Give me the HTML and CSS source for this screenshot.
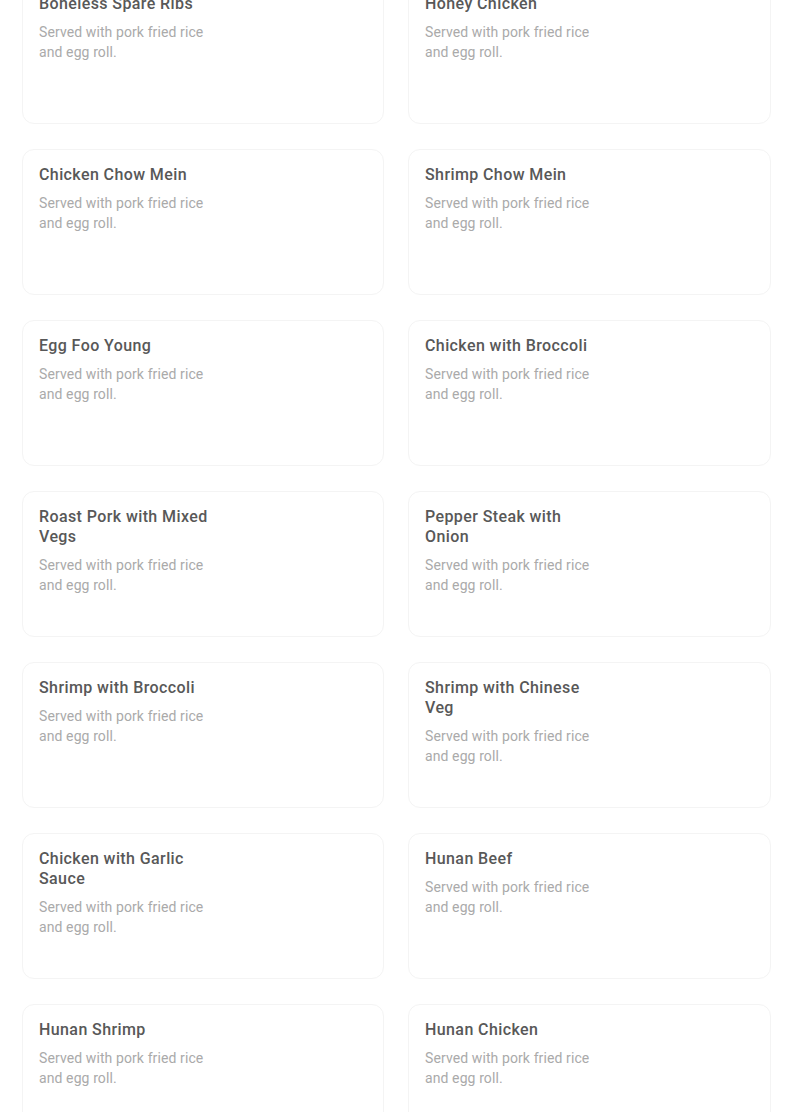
FILE: index.html
```html
<!DOCTYPE html>
<html lang="en">
<head>
<meta charset="utf-8">
<title>Menu</title>
<link rel="stylesheet" href="styles.css">
</head>
<body>
<main class="menu">
  <div class="card"><div class="info"><h3 class="name">Boneless Spare Ribs</h3><p class="desc">Served with pork fried rice and egg roll.</p></div></div>
  <div class="card"><div class="info"><h3 class="name">Honey Chicken</h3><p class="desc">Served with pork fried rice and egg roll.</p></div></div>
  <div class="card"><div class="info"><h3 class="name">Chicken Chow Mein</h3><p class="desc">Served with pork fried rice and egg roll.</p></div></div>
  <div class="card"><div class="info"><h3 class="name">Shrimp Chow Mein</h3><p class="desc">Served with pork fried rice and egg roll.</p></div></div>
  <div class="card"><div class="info"><h3 class="name">Egg Foo Young</h3><p class="desc">Served with pork fried rice and egg roll.</p></div></div>
  <div class="card"><div class="info"><h3 class="name">Chicken with Broccoli</h3><p class="desc">Served with pork fried rice and egg roll.</p></div></div>
  <div class="card"><div class="info"><h3 class="name">Roast Pork with Mixed Vegs</h3><p class="desc">Served with pork fried rice and egg roll.</p></div></div>
  <div class="card"><div class="info"><h3 class="name">Pepper Steak with Onion</h3><p class="desc">Served with pork fried rice and egg roll.</p></div></div>
  <div class="card"><div class="info"><h3 class="name">Shrimp with Broccoli</h3><p class="desc">Served with pork fried rice and egg roll.</p></div></div>
  <div class="card"><div class="info"><h3 class="name">Shrimp with Chinese Veg</h3><p class="desc">Served with pork fried rice and egg roll.</p></div></div>
  <div class="card"><div class="info"><h3 class="name">Chicken with Garlic Sauce</h3><p class="desc">Served with pork fried rice and egg roll.</p></div></div>
  <div class="card"><div class="info"><h3 class="name">Hunan Beef</h3><p class="desc">Served with pork fried rice and egg roll.</p></div></div>
  <div class="card"><div class="info"><h3 class="name">Hunan Shrimp</h3><p class="desc">Served with pork fried rice and egg roll.</p></div></div>
  <div class="card"><div class="info"><h3 class="name">Hunan Chicken</h3><p class="desc">Served with pork fried rice and egg roll.</p></div></div>
</main>
</body>
</html>
```
FILE: styles.css
```css
html, body {
  margin: 0;
  padding: 0;
  background: #ffffff;
  overflow: hidden;
}
body {
  font-family: Roboto, "Noto Sans", "Liberation Sans", sans-serif;
  height: 1112px;
}
.menu {
  display: grid;
  grid-template-columns: 362px 363px;
  grid-auto-rows: 146px;
  column-gap: 24px;
  row-gap: 25px;
  margin: -22px 0 0 22px;
}
.card {
  box-sizing: border-box;
  border: 1px solid #f4f4f4;
  border-radius: 12px;
  padding: 15px 16px;
  background: #fff;
}
.info {
  width: 178px;
}
.name {
  margin: 0;
  font-size: 16px;
  font-weight: 500;
  letter-spacing: 0.4px;
  line-height: 20px;
  color: #585858;
}
.desc {
  margin: 8px 0 0;
  font-size: 14px;
  font-weight: 400;
  letter-spacing: 0.1px;
  line-height: 20px;
  color: #aaaaaa;
}
```
